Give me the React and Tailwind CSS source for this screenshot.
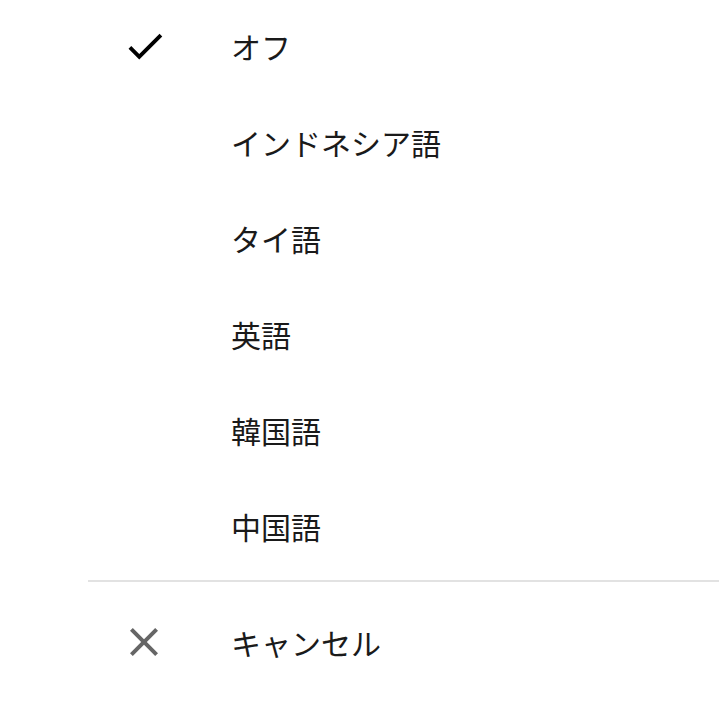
export default function App() {
  const items = ["オフ", "インドネシア語", "タイ語", "英語", "韓国語", "中国語"];
  const font = { fontFamily: '"Noto Sans CJK JP", "Noto Sans", sans-serif' };
  return (
    <div className="w-[719px] h-[719px] bg-white overflow-hidden" style={font}>
      <div className="flex flex-col -mt-[2px]">
        {items.map((t, i) => (
          <div key={t} className="flex items-center h-[96px]">
            <div className="w-[231px] flex items-center">
              {i === 0 && (
                <svg className="ml-[122px]" width="46" height="46" viewBox="0 0 24 24">
                  <path d="M9 16.17L4.83 12l-1.42 1.41L9 19 21 7l-1.41-1.41z" fill="#000" />
                </svg>
              )}
            </div>
            <span className="text-[30px] leading-none text-[#1a1a1a]">{t}</span>
          </div>
        ))}
      </div>
      <div className="ml-[88px] mt-[6px] h-[2px] bg-[#e2e2e2]" />
      <div className="flex items-center h-[120px]">
        <div className="w-[231px] flex items-center">
          <svg className="ml-[120px]" width="48" height="48" viewBox="0 0 24 24">
            <path d="M19 6.41L17.59 5 12 10.59 6.41 5 5 6.41 10.59 12 5 17.59 6.41 19 12 13.41 17.59 19 19 17.59 13.41 12z" fill="#666" />
          </svg>
        </div>
        <span className="text-[30px] leading-none text-[#1a1a1a]">キャンセル</span>
      </div>
    </div>
  );
}
